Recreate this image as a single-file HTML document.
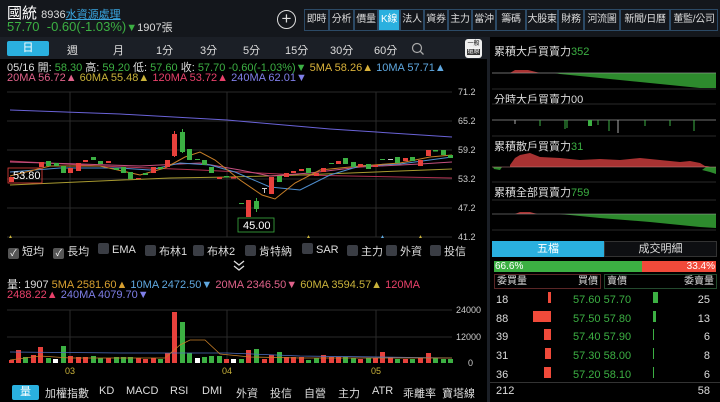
<!DOCTYPE html>
<html><head><meta charset="utf-8"><style>
*{margin:0;padding:0;box-sizing:border-box}
body{width:720px;height:402px;background:#000;overflow:hidden;font-family:"Liberation Sans","Noto Sans CJK TC",sans-serif;color:#ddd;position:relative}
.a{position:absolute;white-space:nowrap}
.g{color:#3cb043}.r{color:#e8413c}
.tab{position:absolute;top:9px;height:22px;border:1px solid #2c4a66;background:#14171c;color:#ddd;font-size:10px;line-height:20px;text-align:center;white-space:nowrap;overflow:hidden;letter-spacing:-0.3px}
.per{position:absolute;top:42px;font-size:11px;color:#ddd}
.cb{display:inline-block;width:11px;height:11px;background:#3a3d44;border-radius:2px;vertical-align:-1px;margin-right:3px}
.bt{position:absolute;top:385px;font-size:11px;color:#ddd}
</style></head><body>
<div class="a" style="left:0;top:0;width:720px;height:37px;background:#14171c"></div>
<div class="a" style="left:7px;top:2px;font-size:15px;color:#fff">國統 <span style="font-size:11px;color:#ddd">8936</span><span style="font-size:11px;color:#3aa6e0;text-decoration:underline">水資源處理</span></div>
<div class="a g" style="left:7px;top:19px;font-size:13px">57.70&nbsp;&nbsp;-0.60(-1.03%)<span style="font-size:11px">▼</span><span style="color:#ddd;font-size:11px">1907張</span></div>
<div class="a" style="left:277px;top:10px;width:19px;height:19px;border:1.5px solid #ddd;border-radius:50%;text-align:center;line-height:15px;font-size:17px;color:#ddd">+</div>
<div class="tab" style="left:304px;width:25px">即時</div>
<div class="tab" style="left:329px;width:25px">分析</div>
<div class="tab" style="left:354px;width:24px">價量</div>
<div class="tab" style="left:378px;width:22px;background:#2ab0df;color:#fff">K線</div>
<div class="tab" style="left:400px;width:24px">法人</div>
<div class="tab" style="left:424px;width:24px">資券</div>
<div class="tab" style="left:448px;width:24px">主力</div>
<div class="tab" style="left:472px;width:24px">當沖</div>
<div class="tab" style="left:496px;width:30px">籌碼</div>
<div class="tab" style="left:526px;width:32px">大股東</div>
<div class="tab" style="left:558px;width:26px">財務</div>
<div class="tab" style="left:584px;width:36px">河流圖</div>
<div class="tab" style="left:620px;width:50px">新聞/日曆</div>
<div class="tab" style="left:670px;width:48px">董監/公司</div>

<div class="a" style="left:0;top:37px;width:487px;height:22px;background:#1b1f26"></div>
<div class="a" style="left:7px;top:41px;width:42px;height:15px;background:#2ab0df;border-radius:2px;color:#fff;font-size:11px;text-align:center;line-height:15px">日</div>
<div class="per" style="left:67px">週</div><div class="per" style="left:113px">月</div><div class="per" style="left:156px">1分</div><div class="per" style="left:200px">3分</div><div class="per" style="left:243px">5分</div><div class="per" style="left:285px">15分</div><div class="per" style="left:330px">30分</div><div class="per" style="left:374px">60分</div>
<svg class="a" style="left:411px;top:42px" width="14" height="14"><circle cx="6" cy="6" r="4.5" stroke="#aaa" stroke-width="1.2" fill="none"/><line x1="9.3" y1="9.3" x2="12.5" y2="12.5" stroke="#aaa" stroke-width="1.3"/></svg>
<div class="a" style="left:465px;top:39px;width:17px;height:19px;background:#eee;border-radius:3px;font-size:6px;color:#000;text-align:center;line-height:8px;padding-top:1px">一般<br><span style="background:#333;color:#fff">還原</span></div>
<div class="a" style="left:487px;top:37px;width:3px;height:365px;background:#1b1f26"></div>

<div class="a" style="left:7px;top:59px;font-size:11px;color:#ddd">05/16 開: <span class="g">58.30</span> 高: <span class="g">59.20</span> 低: <span class="g">57.60</span> 收: <span class="g">57.70 -0.60(-1.03%)▼</span> <span style="color:#d8b13a">5MA 58.26▲</span> <span style="color:#5fa8e0">10MA 57.71▲</span></div>
<div class="a" style="left:7px;top:72px;font-size:11px"><span style="color:#e0628a">20MA 56.72▲</span> <span style="color:#c9b23a">60MA 55.48▲</span> <span style="color:#e8416a">120MA 53.72▲</span> <span style="color:#7f7fe8">240MA 62.01▼</span></div>

<svg class="a" style="left:0;top:85px" width="487" height="160" viewBox="0 85 487 160">
<g stroke="#2a2a2a" stroke-width="1">
<line x1="7" y1="92" x2="452" y2="92"/><line x1="7" y1="121" x2="452" y2="121"/><line x1="7" y1="150" x2="452" y2="150"/><line x1="7" y1="179" x2="452" y2="179"/><line x1="7" y1="208" x2="452" y2="208"/><line x1="7" y1="237" x2="452" y2="237"/>
<line x1="70" y1="92" x2="70" y2="237"/><line x1="227" y1="92" x2="227" y2="237"/><line x1="376" y1="92" x2="376" y2="237"/>
</g>
<g fill="#ccc" font-size="9" font-family="Liberation Sans">
<text x="458" y="95">71.2</text><text x="458" y="124">65.2</text><text x="458" y="153">59.2</text><text x="458" y="182">53.2</text><text x="458" y="211">47.2</text><text x="458" y="240">41.2</text></g>
<g fill="none" stroke-width="1">
<polyline stroke="#6a63d8" points="10,110 120,114 227,120 330,129 452,137"/>
<polyline stroke="#b03050" points="10,161 100,166 200,170 300,175 452,178"/>
<polyline stroke="#a89a30" points="10,185 100,181 170,178 230,177 300,175 400,171 452,169"/>
<polyline stroke="#c45080" points="10,162 80,164 140,166 200,163 240,170 270,176 310,173 360,167 420,164 452,162"/>
<polyline stroke="#4f8fd0" points="10,172 60,168 120,168 150,170 180,163 210,165 235,172 270,187 300,190 330,175 360,166 400,164 452,157"/>
<polyline stroke="#c87f28" points="10,176 50,166 100,166 140,175 165,168 185,157 200,152 215,160 240,180 262,195 275,199 295,183 320,170 360,166 400,163 430,157 452,155"/>
</g>
<g>
<rect x="9" y="177" width="5" height="5" fill="#e8413c"/><rect x="39" y="162" width="5" height="5" fill="#e8413c"/><rect x="46" y="161" width="5" height="5" fill="#3cb043"/><rect x="54" y="163" width="5" height="3" fill="#3cb043"/><rect x="61" y="166" width="5" height="7" fill="#3cb043"/><rect x="68" y="168" width="5" height="5" fill="#e8413c"/><rect x="76" y="163" width="5" height="8" fill="#e8413c"/><rect x="83" y="160" width="5" height="2" fill="#e8413c"/><rect x="91" y="157" width="5" height="3" fill="#3cb043"/><rect x="98" y="161" width="5" height="3" fill="#3cb043"/><rect x="106" y="161" width="5" height="2" fill="#e8413c"/><rect x="114" y="168" width="5" height="2" fill="#3cb043"/><rect x="121" y="167" width="5" height="6" fill="#3cb043"/><rect x="128" y="172" width="5" height="7" fill="#3cb043"/><rect x="136" y="178" width="5" height="1" fill="#e8413c"/><rect x="143" y="173" width="5" height="2" fill="#3cb043"/><rect x="151" y="167" width="5" height="6" fill="#e8413c"/><rect x="158" y="167" width="5" height="2" fill="#3cb043"/><rect x="165" y="160" width="5" height="7" fill="#e8413c"/>
<line x1="174.5" y1="131" x2="174.5" y2="157" stroke="#e8413c"/><rect x="172" y="134" width="5" height="22" fill="#e8413c"/>
<line x1="182.5" y1="129" x2="182.5" y2="153" stroke="#3cb043"/><rect x="180" y="132" width="5" height="20" fill="#3cb043"/>
<rect x="187" y="149" width="5" height="11" fill="#3cb043"/><rect x="195" y="159" width="5" height="1" fill="#3cb043"/><rect x="202" y="160" width="5" height="5" fill="#3cb043"/><rect x="209" y="167" width="5" height="6" fill="#3cb043"/><rect x="217" y="177" width="5" height="2" fill="#e8413c"/><rect x="224" y="176" width="5" height="1.5" fill="#3cb043"/><rect x="231" y="177" width="5" height="1.5" fill="#e8413c"/><rect x="239" y="203" width="5" height="1" fill="#3cb043"/>
<rect x="246" y="200" width="5" height="17" fill="#e8413c"/><line x1="256.5" y1="198" x2="256.5" y2="212" stroke="#3cb043"/><rect x="254" y="201" width="5" height="8" fill="#3cb043"/><rect x="262" y="188" width="5" height="1" fill="#ccc"/><line x1="264.5" y1="188" x2="264.5" y2="193" stroke="#ccc"/>
<rect x="269" y="177" width="5" height="17" fill="#e8413c"/><rect x="277" y="176" width="5" height="6" fill="#3cb043"/><rect x="284" y="173" width="5" height="4" fill="#e8413c"/><rect x="291" y="171" width="5" height="2" fill="#e8413c"/><rect x="299" y="169" width="5" height="2" fill="#e8413c"/><rect x="306" y="168" width="5" height="5" fill="#3cb043"/><rect x="314" y="173" width="5" height="3" fill="#e8413c"/><rect x="321" y="168" width="5" height="4" fill="#e8413c"/><rect x="329" y="163" width="5" height="1" fill="#3cb043"/><rect x="336" y="161" width="5" height="3" fill="#e8413c"/><rect x="343" y="158" width="5" height="6" fill="#3cb043"/><rect x="351" y="162" width="5" height="5" fill="#3cb043"/><rect x="358" y="164" width="5" height="3" fill="#e8413c"/><rect x="366" y="164" width="5" height="5" fill="#3cb043"/><rect x="373" y="165" width="5" height="2" fill="#e8413c"/><rect x="380" y="159" width="5" height="1" fill="#3cb043"/><rect x="388" y="159" width="5" height="1" fill="#ccc"/><rect x="395" y="157" width="5" height="6" fill="#3cb043"/><rect x="403" y="158" width="5" height="3" fill="#e8413c"/><rect x="410" y="157" width="5" height="4" fill="#3cb043"/><rect x="418" y="160" width="5" height="6" fill="#e8413c"/><rect x="426" y="150" width="5" height="6" fill="#e8413c"/><rect x="433" y="150" width="5" height="1.5" fill="#3cb043"/><rect x="441" y="150" width="5" height="5" fill="#3cb043"/><rect x="448" y="155" width="5" height="3" fill="#3cb043"/>
</g>
<rect x="8" y="168" width="34" height="15" fill="none" stroke="#e8413c" stroke-width="0.8"/>
<text x="13" y="179" fill="#fff" font-size="11" font-family="Liberation Sans">53.80</text>
<rect x="238" y="218" width="36" height="14" fill="#000" stroke="#3cb043" stroke-width="0.8"/>
<text x="243" y="229" fill="#fff" font-size="11" font-family="Liberation Sans">45.00</text>
<g fill="#c9b23a" font-size="5"><text x="8" y="238">▲</text><text x="306" y="238">▲</text><text x="418" y="238">▲</text></g><text x="380" y="238" fill="#5fa8e0" font-size="5">▲</text>
</svg>

<div class="a" style="left:8px;top:243px;font-size:11px;color:#ddd"><span class="cb" style="background:#555;color:#fff;font-size:9px;line-height:11px;text-align:center">✓</span>短均&nbsp;&nbsp;&nbsp;<span class="cb" style="background:#555;color:#fff;font-size:9px;line-height:11px;text-align:center">✓</span>長均</div>
<div class="a" style="left:98px;top:243px;font-size:11px"><span class="cb"></span>EMA</div>
<div class="a" style="left:145px;top:243px;font-size:11px"><span class="cb"></span>布林1</div>
<div class="a" style="left:193px;top:243px;font-size:11px"><span class="cb"></span>布林2</div>
<div class="a" style="left:245px;top:243px;font-size:11px"><span class="cb"></span>肯特納</div>
<div class="a" style="left:302px;top:243px;font-size:11px"><span class="cb"></span>SAR</div>
<div class="a" style="left:347px;top:243px;font-size:11px"><span class="cb"></span>主力</div>
<div class="a" style="left:386px;top:243px;font-size:11px"><span class="cb"></span>外資</div>
<div class="a" style="left:430px;top:243px;font-size:11px"><span class="cb"></span>投信</div>
<svg class="a" style="left:232px;top:260px" width="14" height="12"><polyline points="2,1 7,5 12,1" fill="none" stroke="#ddd" stroke-width="1.3"/><polyline points="2,6 7,10 12,6" fill="none" stroke="#ddd" stroke-width="1.3"/></svg>
<div class="a" style="left:7px;top:276px;font-size:11px;color:#ddd">量: 1907 <span style="color:#d8a030">5MA 2581.60▲</span> <span style="color:#5fa8e0">10MA 2472.50▼</span> <span style="color:#e0628a">20MA 2346.50▼</span> <span style="color:#c9b23a">60MA 3594.57▲</span> <span style="color:#e8416a">120MA</span></div>
<div class="a" style="left:7px;top:289px;font-size:11px"><span style="color:#e8416a">2488.22▲</span> <span style="color:#7f7fe8">240MA 4079.70▼</span></div>

<svg class="a" style="left:0;top:305px" width="487" height="75" viewBox="0 305 487 75">
<g stroke="#2a2a2a"><line x1="7" y1="310" x2="452" y2="310"/><line x1="7" y1="337" x2="452" y2="337"/><line x1="70" y1="310" x2="70" y2="363"/><line x1="227" y1="310" x2="227" y2="363"/><line x1="376" y1="310" x2="376" y2="363"/></g>
<g fill="#ccc" font-size="9" font-family="Liberation Sans"><text x="456" y="313">24000</text><text x="456" y="340">12000</text><text x="468" y="366">0</text></g>
<g fill="#c9b23a" font-size="9" font-family="Liberation Sans"><text x="65" y="374">03</text><text x="222" y="374">04</text><text x="371" y="374">05</text></g>
<g>
<rect x="9" y="360" width="5" height="3" fill="#e8413c"/><rect x="16" y="350" width="5" height="13" fill="#e8413c"/><rect x="23" y="357" width="5" height="6" fill="#3cb043"/><rect x="31" y="355" width="5" height="8" fill="#e8413c"/><rect x="38" y="347" width="5" height="16" fill="#e8413c"/><rect x="46" y="358" width="5" height="5" fill="#3cb043"/><rect x="53" y="359" width="5" height="4" fill="#fff"/><rect x="61" y="346" width="5" height="17" fill="#3cb043"/><rect x="68" y="356" width="5" height="7" fill="#e8413c"/><rect x="76" y="357" width="5" height="6" fill="#e8413c"/><rect x="83" y="357" width="5" height="6" fill="#e8413c"/><rect x="91" y="356" width="5" height="7" fill="#3cb043"/><rect x="98" y="358" width="5" height="5" fill="#3cb043"/><rect x="106" y="358" width="5" height="5" fill="#e8413c"/><rect x="114" y="357" width="5" height="6" fill="#3cb043"/><rect x="121" y="357" width="5" height="6" fill="#3cb043"/><rect x="128" y="357" width="5" height="6" fill="#3cb043"/><rect x="136" y="358" width="5" height="5" fill="#e8413c"/><rect x="143" y="359" width="5" height="4" fill="#e8413c"/><rect x="151" y="358" width="5" height="5" fill="#e8413c"/><rect x="158" y="359" width="5" height="4" fill="#3cb043"/><rect x="165" y="353" width="5" height="10" fill="#e8413c"/><rect x="172" y="312" width="5" height="51" fill="#e8413c"/><rect x="180" y="322" width="5" height="41" fill="#3cb043"/><rect x="187" y="353" width="5" height="10" fill="#3cb043"/><rect x="195" y="358" width="5" height="5" fill="#fff"/><rect x="202" y="357" width="5" height="6" fill="#3cb043"/><rect x="209" y="356" width="5" height="7" fill="#3cb043"/><rect x="217" y="356" width="5" height="7" fill="#3cb043"/><rect x="224" y="359" width="5" height="4" fill="#e8413c"/><rect x="231" y="359" width="5" height="4" fill="#fff"/><rect x="239" y="359" width="5" height="4" fill="#3cb043"/><rect x="246" y="350" width="5" height="13" fill="#e8413c"/><rect x="254" y="349" width="5" height="14" fill="#3cb043"/><rect x="262" y="359" width="5" height="4" fill="#e8413c"/><rect x="269" y="355" width="5" height="8" fill="#e8413c"/><rect x="277" y="352" width="5" height="11" fill="#3cb043"/><rect x="284" y="357" width="5" height="6" fill="#e8413c"/><rect x="291" y="357" width="5" height="6" fill="#e8413c"/><rect x="299" y="357" width="5" height="6" fill="#e8413c"/><rect x="306" y="360" width="5" height="3" fill="#3cb043"/><rect x="314" y="358" width="5" height="5" fill="#3cb043"/><rect x="321" y="355" width="5" height="8" fill="#e8413c"/><rect x="329" y="357" width="5" height="6" fill="#e8413c"/><rect x="336" y="357" width="5" height="6" fill="#e8413c"/><rect x="343" y="357" width="5" height="6" fill="#3cb043"/><rect x="351" y="358" width="5" height="5" fill="#3cb043"/><rect x="358" y="359" width="5" height="4" fill="#e8413c"/><rect x="366" y="358" width="5" height="5" fill="#3cb043"/><rect x="373" y="358" width="5" height="5" fill="#e8413c"/><rect x="380" y="352" width="5" height="11" fill="#e8413c"/><rect x="388" y="357" width="5" height="6" fill="#e8413c"/><rect x="395" y="359" width="5" height="4" fill="#3cb043"/><rect x="403" y="359" width="5" height="4" fill="#e8413c"/><rect x="410" y="359" width="5" height="4" fill="#3cb043"/><rect x="418" y="358" width="5" height="5" fill="#e8413c"/><rect x="426" y="353" width="5" height="10" fill="#e8413c"/><rect x="433" y="358" width="5" height="5" fill="#3cb043"/><rect x="441" y="359" width="5" height="4" fill="#3cb043"/><rect x="448" y="359" width="5" height="4" fill="#3cb043"/>
</g>
<g fill="none" stroke-width="0.8"><polyline stroke="#4f6fc0" points="10,352 120,353 227,353 300,356 452,358"/><polyline stroke="#c87f28" points="10,360 40,356 70,358 165,358 180,345 190,340 205,340 220,354 250,357 300,358 452,358"/></g>
</svg>
<div class="a" style="left:12px;top:385px;width:27px;height:15px;background:#2ab0df;border-radius:2px;color:#fff;font-size:11px;text-align:center;line-height:15px">量</div>
<div class="bt" style="left:45px">加權指數</div><div class="bt" style="left:99px">KD</div><div class="bt" style="left:126px">MACD</div><div class="bt" style="left:170px">RSI</div><div class="bt" style="left:202px">DMI</div><div class="bt" style="left:236px">外資</div><div class="bt" style="left:270px">投信</div><div class="bt" style="left:304px">自營</div><div class="bt" style="left:338px">主力</div><div class="bt" style="left:372px">ATR</div><div class="bt" style="left:403px">乖離率</div><div class="bt" style="left:442px">寶塔線</div>

<div class="a" style="left:494px;top:43px;font-size:11px;color:#ddd">累積大戶買賣力<span class="g">352</span></div>
<div class="a" style="left:494px;top:91px;font-size:11px;color:#ddd">分時大戶買賣力00</div>
<div class="a" style="left:494px;top:138px;font-size:11px;color:#ddd">累積散戶買賣力<span class="g">31</span></div>
<div class="a" style="left:494px;top:184px;font-size:11px;color:#ddd">累積全部買賣力<span class="g">759</span></div>
<svg class="a" style="left:490px;top:58px" width="230" height="180" viewBox="490 58 230 180">
<g stroke="#2a2a2a"><line x1="492" y1="73" x2="716" y2="73"/><line x1="492" y1="89" x2="716" y2="89"/><line x1="492" y1="104" x2="716" y2="104"/><line x1="492" y1="120" x2="716" y2="120"/><line x1="492" y1="136" x2="716" y2="136"/><line x1="492" y1="182" x2="716" y2="182"/><line x1="492" y1="200" x2="716" y2="200"/><line x1="492" y1="230" x2="716" y2="230"/></g>
<polygon fill="#a83232" points="510,73 515,70 528,70 540,73"/>
<polygon fill="#2d8a2d" points="555,73 716,73 716,88 700,88 640,82 600,78 560,74"/>
<line x1="492" y1="73" x2="716" y2="73" stroke="#aaa" stroke-width="0.6"/>
<line x1="492" y1="120" x2="716" y2="120" stroke="#888" stroke-width="0.8"/>
<g stroke="#3cb043"><line x1="540" y1="120" x2="540" y2="126"/><line x1="565" y1="120" x2="565" y2="129"/><line x1="567" y1="120" x2="567" y2="128"/><line x1="590" y1="120" x2="590" y2="126" stroke-width="4"/><line x1="598" y1="120" x2="598" y2="125"/><line x1="609" y1="120" x2="609" y2="131"/><line x1="645" y1="120" x2="645" y2="126"/><line x1="670" y1="120" x2="670" y2="126"/><line x1="694" y1="120" x2="694" y2="131"/></g>
<g stroke="#aaa"><line x1="515" y1="120" x2="515" y2="124"/><line x1="618" y1="120" x2="618" y2="133"/></g>
<polygon fill="#a83232" points="510,165 515,158 520,155 530,153 540,157 560,158 580,160 600,159 620,160 640,158 660,160 680,162 690,161 700,163 705,166 710,166 706,167 510,167"/>
<polygon fill="#2d8a2d" points="493,167 502,167 500,170 494,169"/>
<polygon fill="#2d8a2d" points="706,167 716,167 716,174 710,172 702,170"/>
<line x1="492" y1="167" x2="716" y2="167" stroke="#c88" stroke-width="0.6"/>
<polygon fill="#a83232" points="515,214 520,212 530,212 537,214"/>
<polygon fill="#2d8a2d" points="560,214 716,214 716,228 700,227 650,222 600,218"/>
<line x1="492" y1="214" x2="716" y2="214" stroke="#aaa" stroke-width="0.6"/>
</svg>
<div class="a" style="left:492px;top:241px;width:112px;height:16px;background:#2ab0df;color:#fff;font-size:11px;text-align:center;line-height:16px">五檔</div>
<div class="a" style="left:604px;top:241px;width:113px;height:16px;background:#0e0f12;border:1px solid #333;color:#ddd;font-size:11px;text-align:center;line-height:14px">成交明細</div>
<div class="a" style="left:494px;top:261px;width:148px;height:11px;background:#3cb043;color:#fff;font-size:10px;line-height:11px;padding-left:1px">66.6%</div>
<div class="a" style="left:642px;top:261px;width:74px;height:11px;background:#f04a3a;color:#fff;font-size:10px;line-height:11px;text-align:right;padding-right:1px">33.4%</div>
<div class="a" style="left:494px;top:274px;width:107px;height:15px;border:1px solid #5a2626;font-size:10px;line-height:13px;padding:0 2px;color:#ddd">委買量<span style="float:right">買價</span></div>
<div class="a" style="left:604px;top:274px;width:113px;height:15px;border:1px solid #234a2e;font-size:10px;line-height:13px;padding:0 2px;color:#ddd">賣價<span style="float:right">委賣量</span></div>
<div class="a" style="left:496px;top:291px;font-size:11px;line-height:18.7px;color:#ddd">18<br>88<br>39<br>31<br>36</div>
<div class="a g" style="left:573px;top:291px;font-size:11px;line-height:18.7px">57.60 57.70<br>57.50 57.80<br>57.40 57.90<br>57.30 58.00<br>57.20 58.10</div>
<div class="a" style="left:690px;top:291px;width:20px;text-align:right;font-size:11px;line-height:18.7px;color:#ddd">25<br>13<br>6<br>8<br>6</div>
<div class="a" style="left:548px;top:292px;width:3px;height:11px;background:#f04a3a"></div>
<div class="a" style="left:533px;top:311px;width:18px;height:11px;background:#f04a3a"></div>
<div class="a" style="left:544px;top:329px;width:7px;height:11px;background:#f04a3a"></div>
<div class="a" style="left:545px;top:348px;width:6px;height:11px;background:#f04a3a"></div>
<div class="a" style="left:544px;top:367px;width:7px;height:11px;background:#f04a3a"></div>
<div class="a" style="left:653px;top:292px;width:5px;height:11px;background:#3cb043"></div>
<div class="a" style="left:653px;top:311px;width:3px;height:11px;background:#3cb043"></div>
<div class="a" style="left:653px;top:329px;width:1px;height:11px;background:#3cb043"></div>
<div class="a" style="left:653px;top:348px;width:1px;height:11px;background:#3cb043"></div>
<div class="a" style="left:653px;top:367px;width:1px;height:11px;background:#3cb043"></div>
<div class="a" style="left:490px;top:382px;width:230px;height:1px;background:#333"></div>
<div class="a" style="left:496px;top:385px;font-size:11px;color:#ddd">212</div>
<div class="a" style="left:690px;top:385px;width:20px;text-align:right;font-size:11px;color:#ddd">58</div>
</body></html>
